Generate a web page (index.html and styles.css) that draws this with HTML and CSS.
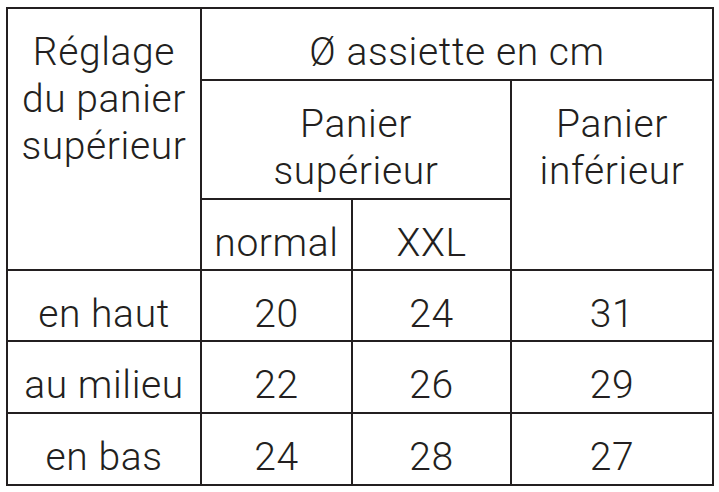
FILE: index.html
```html
<!DOCTYPE html>
<html lang="fr">
<head>
<meta charset="utf-8">
<title>Diamètre des assiettes</title>
<link rel="stylesheet" href="styles.css">
</head>
<body>
<table class="grid">
  <colgroup>
    <col class="c1"><col class="c2"><col class="c3"><col class="c4">
  </colgroup>
  <tr class="r1">
    <th rowspan="3">Réglage<br>du panier<br>supérieur</th>
    <th colspan="3">Ø assiette en cm</th>
  </tr>
  <tr class="r2">
    <th colspan="2">Panier<br>supérieur</th>
    <th rowspan="2">Panier<br>inférieur</th>
  </tr>
  <tr class="r3">
    <th>normal</th>
    <th>XXL</th>
  </tr>
  <tr class="r4">
    <td>en haut</td><td>20</td><td>24</td><td>31</td>
  </tr>
  <tr class="r5">
    <td>au milieu</td><td>22</td><td>26</td><td>29</td>
  </tr>
  <tr class="r6">
    <td>en bas</td><td>24</td><td>28</td><td>27</td>
  </tr>
</table>
</body>
</html>
```
FILE: styles.css
```css
html, body {
  margin: 0;
  padding: 0;
  background: #ffffff;
}

body {
  padding: 7px 0 0 6px;
}

.grid {
  border-collapse: collapse;
  table-layout: fixed;
  width: 706px;
  font-family: Roboto, "Liberation Sans", sans-serif;
  font-weight: 300;
  font-size: 39px;
  letter-spacing: 0.6px;
  line-height: 47px;
  color: #231f20;
}

.c1 { width: 194px; }
.c2 { width: 151px; }
.c3 { width: 159px; }
.c4 { width: 202px; }

.grid th,
.grid td {
  border: 2px solid #231f20;
  padding: 20px 0 0 0;
  text-align: center;
  vertical-align: top;
  font-weight: 300;
}

.r1 { height: 72px; }
.r2 { height: 119px; }
.r3 { height: 71px; }
.r4 { height: 71px; }
.r5 { height: 72px; }
.r6 { height: 72px; }
```
